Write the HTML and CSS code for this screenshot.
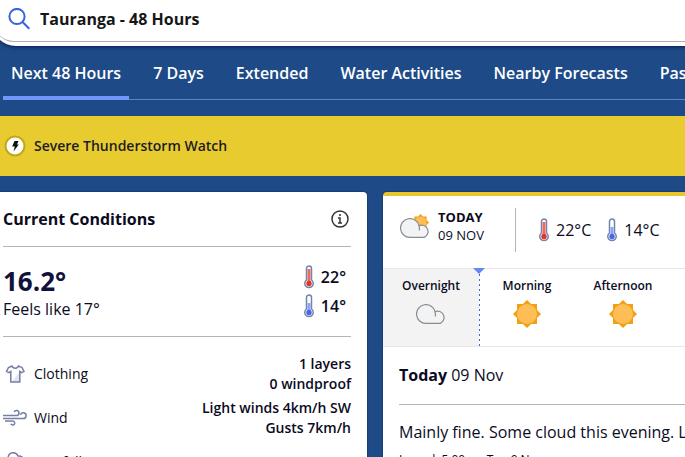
FILE: index.html
```html
<!DOCTYPE html>
<html lang="en">
<head>
<meta charset="utf-8">
<title>Tauranga - 48 Hours</title>
<link rel="stylesheet" href="styles.css">
</head>
<body>
<svg class="sprite" aria-hidden="true">
  <symbol id="cloud" viewBox="0 0 30 20">
    <path d="M24.200 19.400H10A9.400 9.400 0 1 1 19 7.600A5.900 5.900 0 1 1 24.200 19.400Z"/>
    <path fill="none" d="M19 7.600Q19.800 10 19.200 12.500"/>
  </symbol>
  <symbol id="sun" viewBox="0 0 28 28">
    <path fill="#f0a010" d="M14 0l4.100 4H24v5.900l4 4.100-4 4.100V24h-5.900L14 28l-4.100-4H4v-5.900L0 14l4-4.100V4h5.900z"/>
    <circle cx="14" cy="14" r="10" fill="#ffbd57"/>
  </symbol>
  <symbol id="warm" viewBox="0 0 10 24">
    <path class="tube" d="M2.500 15V3.500a2.500 2.500 0 0 1 5 0V15a4.200 4.200 0 1 1-5 0z"/>
    <path stroke="#ee6b5c" stroke-width="3" d="M5 4v14"/>
    <circle cx="5" cy="18.500" r="2.700" fill="#e23522"/>
  </symbol>
  <symbol id="cool" viewBox="0 0 10 24">
    <path class="tube" d="M2.500 15V3.500a2.500 2.500 0 0 1 5 0V15a4.200 4.200 0 1 1-5 0z"/>
    <path stroke="#8da4f5" stroke-width="3" d="M5 9v9"/>
    <circle cx="5" cy="18.500" r="2.700" fill="#4468e8"/>
  </symbol>
</svg>

<header class="search">
  <label class="search-box">
    <svg class="search-icon" viewBox="0 0 22 22" role="img" aria-label="Search"><circle cx="9" cy="8.500" r="7.600"/><path d="M14.300 13.700l7 7"/></svg>
    <input type="text" value="Tauranga - 48 Hours">
  </label>
</header>

<nav class="tabs">
  <a class="tab current" href="#now">Next 48 Hours</a>
  <a class="tab" href="#days">7 Days</a>
  <a class="tab" href="#extended">Extended</a>
  <a class="tab" href="#water">Water Activities</a>
  <a class="tab" href="#nearby">Nearby Forecasts</a>
  <a class="tab" href="#past">Past Weather</a>
</nav>

<a class="alert" href="#watch">
  <svg class="bolt" viewBox="0 0 22 22"><circle cx="11" cy="11" r="9.500"/><path d="M10.500 6h4l-1.500 3.500h1.800L9.500 16.500l1.300-5H8.200z"/></svg>
  Severe Thunderstorm Watch
</a>

<main class="cards">
  <section class="card now">
    <div class="now-head">
      <h2>Current Conditions</h2>
      <button class="info" aria-label="About current conditions">
        <svg viewBox="0 0 18 18"><circle cx="9" cy="9" r="8"/><path d="M9 4v2M7 8h2v5M7 13h4"/></svg>
      </button>
    </div>
    <div class="temps">
      <div class="reading">
        <p class="temp">16.2°</p>
        <p class="feels">Feels like 17°</p>
      </div>
      <div class="range">
        <span><svg class="thermo"><use href="#warm"/></svg>22°</span>
        <span><svg class="thermo"><use href="#cool"/></svg>14°</span>
      </div>
    </div>
    <dl class="facts">
      <div class="fact">
        <dt><svg class="fact-icon" viewBox="0 0 24 20"><path class="fold" d="M17 7v11H9z"/><path d="M9 2L5.500 3.500 3.500 7.500l2.500 1.200 1.800-1.200v10.500h9V7.500l1.700 1.200L21 7.500l-2-4L15.500 2c-1 3-5.500 3-6.500 0z"/></svg>Clothing</dt>
        <dd>1 layers<br>0 windproof</dd>
      </div>
      <div class="fact">
        <dt><svg class="fact-icon" viewBox="0 0 24 20"><path d="M0 7.500h13.500a2.500 2.500 0 1 0-2.300-3.500M0 10.500h20.200a2.900 2.900 0 1 0-2.800-3.600M2 13h7.800a2 2 0 1 1-1.900 2.800"/></svg>Wind</dt>
        <dd>Light winds 4km/h SW<br>Gusts 7km/h</dd>
      </div>
      <div class="fact">
        <dt><svg class="fact-icon" viewBox="0 0 24 20"><path d="M6 13a4 4 0 0 1-1-7.500C6-.5 13-.5 15 4c3-.5 5.500 1.500 5.500 4.500S18 13 16 13zM8 15l-1 3M12 15l-1 3M16 15l-1 3"/></svg>Rainfall</dt>
        <dd></dd>
      </div>
    </dl>
  </section>

  <section class="card day">
    <header class="day-head">
      <svg class="day-icon" viewBox="0 0 32 26"><use href="#sun" x="13" y="1" width="17" height="17"/><use class="cloud" href="#cloud" x="1" y="5" width="30" height="20"/></svg>
      <p class="day-name"><b>TODAY</b><br>09 NOV</p>
      <p class="day-range">
        <span><svg class="thermo"><use href="#warm"/></svg>22°C</span>
        <span><svg class="thermo"><use href="#cool"/></svg>14°C</span>
      </p>
    </header>
    <ol class="periods">
      <li class="past">Overnight<svg class="cloud"><use href="#cloud"/></svg></li>
      <li>Morning<svg class="sun"><use href="#sun"/></svg></li>
      <li>Afternoon<svg class="sun"><use href="#sun"/></svg></li>
    </ol>
    <div class="detail">
      <h3><b>Today</b> 09 Nov</h3>
      <p class="forecast">Mainly fine. Some cloud this evening. Light winds.</p>
      <p class="issued">Issued: 5:00pm Tue 9 Nov</p>
    </div>
  </section>
</main>
</body>
</html>
```
FILE: styles.css
```css
* { box-sizing: border-box; }
body, h2, h3, p, ol, dl, dd { margin: 0; padding: 0; }
html { background: #1e4b87; }
body {
  font: 14px/20px "Open Sans", sans-serif;
  color: #0b0b1e;
  overflow: hidden;
}
a { color: inherit; text-decoration: none; }
svg { fill: none; flex: none; }
.sprite { position: absolute; width: 0; height: 0; }

/* Search bar */
.search {
  margin: 0 -24px 0 -8px;
  padding: 0 8px 4px;
  background: #fff;
  border-radius: 0 0 0 24px;
  box-shadow: 0 1px 4px #0a1c50;
}
.search-box {
  display: flex;
  align-items: center;
  gap: 10px;
  height: 42px;
  margin-left: -6px;
  padding: 0 14px 4px;
  border-bottom: 1px solid #b0b0b0;
  border-radius: 0 0 0 20px;
}
.search-icon { width: 22px; height: 22px; stroke: #3a62e0; stroke-width: 2; }
.search input {
  flex: 1;
  min-width: 0;
  padding: 0;
  border: 0;
  outline: 0;
  background: none;
  font: 700 16px/24px "Open Sans", sans-serif;
  color: #161616;
}

/* Tabs */
.tabs {
  display: flex;
  gap: 16px;
  margin: 4px 0 16px 3px;
  box-shadow: inset 0 -1px #5b82c4;
  white-space: nowrap;
}
.tab {
  padding: 11px 8px;
  border-bottom: 4px solid transparent;
  font-size: 16px;
  line-height: 24px;
  font-weight: 600;
  color: #fff;
}
.tab.current { border-color: #7195f8; }

/* Warning banner */
.alert {
  display: flex;
  align-items: center;
  gap: 8px;
  height: 60px;
  padding-left: 4px;
  background: #e8cb2f;
  font-weight: 600;
  color: #1c1c28;
}
.bolt { width: 22px; height: 22px; }
.bolt circle { fill: #fff; stroke: #c2a616; stroke-width: 2; }
.bolt path { fill: #111; }

/* Cards */
.cards {
  display: grid;
  grid-template-columns: 367px minmax(0, 1fr);
  gap: 16px;
  margin-top: 16px;
}
.card {
  background: #fff;
  border-radius: 4px;
  box-shadow: 0 0 2px #0a1c50;
}
.thermo { width: 10px; height: 24px; }
.tube { fill: #fff; stroke: #7183ae; stroke-width: 1.500; }
.cloud { fill: #f2f3f4; stroke: #8a8d90; stroke-width: 1.200; }

.now { padding: 0 16px 0 3px; border-radius: 0 4px 0 0; }
.now-head {
  display: flex;
  align-items: center;
  justify-content: space-between;
  height: 55px;
  border-bottom: 1px solid #b4b4b4;
}
.now h2 { font-size: 16px; line-height: 24px; }
.info { padding: 0 2px; border: 0; background: none; }
.info svg { display: block; width: 18px; height: 18px; stroke: #333; stroke-width: 1.500; }
.temps {
  display: flex;
  align-items: center;
  justify-content: space-between;
  height: 90px;
  border-bottom: 1px solid #b4b4b4;
}
.reading { padding-top: 2px; }
.temp { font-size: 26px; line-height: 32px; font-weight: 700; color: #10123c; }
.feels { font-size: 16px; line-height: 24px; }
.range { display: grid; gap: 5px; padding-right: 5px; font-size: 16px; font-weight: 600; }
.range span { display: flex; align-items: center; gap: 7px; line-height: 24px; }
.facts { padding-top: 15px; }
.fact {
  display: flex;
  align-items: center;
  justify-content: space-between;
  height: 44px;
}
.fact dt { display: flex; align-items: center; gap: 7px; }
.fact dd { text-align: right; font-weight: 600; }
.fact-icon { width: 24px; height: 20px; stroke: #7480a4; stroke-width: 1.500; }
.fact-icon .fold { fill: #dfe4ef; stroke: none; }

.day { border-top: 4px solid #e8c52a; border-radius: 4px 0 0 0; }
.day-head {
  display: flex;
  align-items: center;
  height: 72px;
  padding: 0 0 4px 16px;
}
.day-icon { width: 32px; height: 26px; margin-bottom: 8px; }
.day-name {
  width: 77px;
  margin: 0 0 8px 7px;
  font-size: 13px;
  line-height: 18px;
}
.day-range {
  display: flex;
  align-items: center;
  gap: 16px;
  height: 44px;
  padding-left: 23px;
  border-left: 1px solid #b4b4b4;
  font-size: 16px;
}
.day-range span { display: flex; align-items: center; gap: 7px; }
.periods {
  display: grid;
  grid-template-columns: repeat(3, 96px);
  height: 79px;
  border: solid #e8e8e8;
  border-width: 1px 0;
  list-style: none;
}
.periods li {
  position: relative;
  display: grid;
  grid-template-rows: 18px 28px;
  gap: 5px;
  place-items: center;
  align-content: start;
  padding-top: 8px;
  font-size: 12px;
  line-height: 18px;
  font-weight: 600;
}
.periods .past {
  margin-right: -1px;
  border-right: 1px solid transparent;
  background:
    repeating-linear-gradient(#3f66e4 0 2px, #fff 2px 5px) right / 1px 100% no-repeat border-box,
    #f3f3f3;
}
.past::after {
  content: "";
  position: absolute;
  top: -1px;
  right: -6px;
  border: solid transparent;
  border-width: 6px 6px 0;
  border-top-color: #6288f5;
}
.sun { width: 28px; height: 28px; }
.periods .cloud { width: 30px; height: 20px; }
.detail { padding: 0 0 0 16px; }
.detail h3 {
  padding: 16px 0 17px;
  border-bottom: 1px solid #b4b4b4;
  font-size: 16px;
  line-height: 24px;
  font-weight: 400;
}
.forecast { padding-top: 15px; font-size: 16px; line-height: 24px; white-space: nowrap; }
.issued { margin-top: 6px; font-size: 12px; line-height: 20px; }
```
